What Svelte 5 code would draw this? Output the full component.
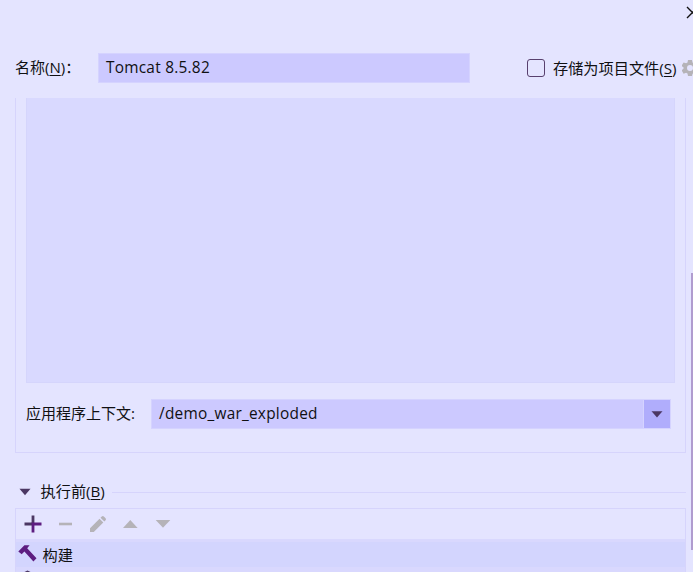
<script>
  let name = 'Tomcat 8.5.82';
  let context = '/demo_war_exploded';
</script>

<div class="dialog">
  <header>
    <svg class="close" width="14" height="14" viewBox="0 0 14 14"><path d="M1 1 12 12M12 1 1 12" stroke="#111" stroke-width="1.4" fill="none" /></svg>
  </header>
  <div class="name-row">
    <span class="label name-label">名称(<u>N</u>)<span class="colon">：</span></span>
    <div class="field name"><span class="latin">{name}</span></div>
    <span class="check"></span>
    <span class="label store">存储为项目文件(<u>S</u>)</span>
    <svg class="gear" width="16" height="16" viewBox="0 0 16 16">
      <path fill="#b5b3b8" fill-rule="evenodd" d="M6 0h4l.5 2.6 1.4.8L14.4 2.5l2 3.4-2 1.8v.9l2 1.8-2 3.4-2.5-.9-1.4.8L10 16H6l-.5-2.4-1.4-.8-2.5.9-2-3.4 2-1.8v-.9l-2-1.8 2-3.4 2.5.9 1.4-.8zM8 5a3 3 0 1 0 0 6 3 3 0 0 0 0-6z" />
    </svg>
  </div>
  <div class="body">
    <div class="content">
      <section class="group">
        <div class="panel"></div>
        <div class="context-row">
          <span class="label ctx">应用程序上下文:</span>
          <div class="field combo">
            <span class="latin">{context}</span>
            <span class="drop"><svg width="12" height="8" viewBox="0 0 12 8"><path d="M.5 1.2h11L6 7.4z" fill="#4b3763" /></svg></span>
          </div>
        </div>
      </section>
      <div class="before">
        <svg width="12" height="8" viewBox="0 0 12 8"><path d="M.5.8h11L6 7.2z" fill="#4b3763" /></svg>
        <span class="label">执行前(<u>B</u>)</span>
        <hr />
      </div>
      <section class="tasks">
        <div class="toolbar">
          <svg width="18" height="18" viewBox="0 0 18 18"><path d="M9 .5v9M.5 9h8.5" stroke="#4b3763" stroke-width="2.8" /><path d="M9 7.6v9.9M7.6 9h9.9" stroke="#5d1d80" stroke-width="2.8" /></svg>
          <svg width="18" height="18" viewBox="0 0 18 18"><path d="M2 9h13" stroke="#b5b3b8" stroke-width="2.6" /></svg>
          <svg width="18" height="18" viewBox="0 0 18 18"><path d="m1 13.2 9.5-9.5 3.8 3.8L4.8 17H1zM11.5 2.7l1.3-1.3q1-.9 2 0l1.8 1.8q.9 1 0 2l-1.3 1.3z" fill="#b5b3b8" /></svg>
          <svg width="18" height="18" viewBox="0 0 18 18"><path d="M1 13h14.6L8.3 5z" fill="#b5b3b8" /></svg>
          <svg width="18" height="18" viewBox="0 0 18 18"><path d="M1.7 5h14.6L9 12.7z" fill="#b5b3b8" /></svg>
        </div>
        <div class="list">
          <div class="item">
            <svg width="20" height="19" viewBox="0 0 20 19"><path d="M.3 7.4 6.4 1.2h5.2L9.2 4.2l9.3 10-3.1 3.2L6.4 7.4 3.7 10.2z" fill="#5d1d80" /></svg>
            <span class="label">构建</span>
          </div>
          <svg class="next" width="20" height="5" viewBox="0 0 20 5"><path d="m6.5 5 3-1.5L12.5 5z" fill="#4b3763" /></svg>
        </div>
      </section>
    </div>
    <div class="track"><div class="thumb"></div></div>
  </div>
</div>

<style>
  :global(body) { margin: 0; overflow: hidden; }
  .dialog {
    width: 693px; height: 572px; overflow: hidden;
    display: flex; flex-direction: column;
    background: #e4e4ff; color: #101012;
    font: 15px/20px "Noto Sans CJK SC", sans-serif;
  }
  svg { display: block; flex: none; }
  .label { white-space: nowrap; font-family: "Open Sans", "Noto Sans CJK SC", sans-serif; font-size: 15.2px; flex: none; padding-bottom: 1px; }
  .latin { font: 15.4px/20px "Open Sans", sans-serif; letter-spacing: .25px; white-space: nowrap; }
  u { text-underline-offset: 2px; text-decoration-thickness: 1px; }
  header { height: 53px; flex: none; display: flex; justify-content: flex-end; overflow: hidden; }
  .close { margin: 6px -7px 0 0; }
  .name-row { height: 30px; flex: none; display: flex; align-items: center; padding-left: 15px; }
  .name-label { width: 83px; font-size: 15px; padding-bottom: 3px; }
  .colon { margin-left: 0; }
  .field { box-sizing: border-box; height: 30px; border: 1px solid #d5d3ff; background: #ccc9ff; display: flex; align-items: center; flex: none; }
  .name { width: 372px; padding-left: 7px; }
  .check { box-sizing: border-box; width: 18px; height: 18px; border: 1.5px solid #58406e; border-radius: 3px; margin-left: 57.4px; flex: none; }
  .store { margin-left: 7.6px; width: 130px; }
  .gear { margin-left: -.5px; }
  .body { flex: 1; min-height: 0; margin-top: 15px; display: flex; overflow: hidden; }
  .content { width: 671px; margin-left: 15px; flex: none; display: flex; flex-direction: column; }
  .group { box-sizing: border-box; height: 355px; flex: none; border: 1px solid #d6d4fc; border-top: 0; padding: 0 10px; }
  .panel { box-sizing: border-box; height: 285px; background: #d9d9ff; border: 1px solid #d5d5fc; border-top: 0; }
  .context-row { display: flex; align-items: center; margin-top: 16px; }
  .ctx { width: 125px; font-size: 15px; padding-bottom: 2px; }
  .combo { width: 520px; padding-left: 7px; justify-content: space-between; }
  .drop { width: 26px; height: 28px; border-left: 1px solid #d5d3ff; background: #b0adfc; display: flex; align-items: center; justify-content: center; }
  .before { height: 20px; flex: none; margin-top: 29px; display: flex; align-items: center; padding-left: 4px; }
  .before svg { margin-top: -1px; }
  .before .label { margin-left: 9.5px; padding-bottom: 3px; }
  hr { flex: 1; height: 1px; border: 0; background: #d6d4fc; margin: 0 0 0 7px; }
  .tasks { flex: none; height: 70px; border: 1px solid #d6d4fc; box-sizing: border-box; border-bottom: 0; margin-top: 6px; }
  .toolbar { height: 30px; display: flex; align-items: center; gap: 14.5px; padding-left: 8px; }
  .list { background: #d9d8fe; padding-top: 3px; height: 36px; }
  .item { height: 25px; background: #d3d5fe; display: flex; align-items: center; padding-left: 2px; }
  .item svg { margin-top: -3px; }
  .item .label { margin-left: 4.5px; padding: 1px 0 0; }
  .next { margin-left: 2px; }
  .track { width: 2px; margin-left: 5px; }
  .thumb { height: 277px; margin-top: 175px; background: #b09ccf; }
</style>
